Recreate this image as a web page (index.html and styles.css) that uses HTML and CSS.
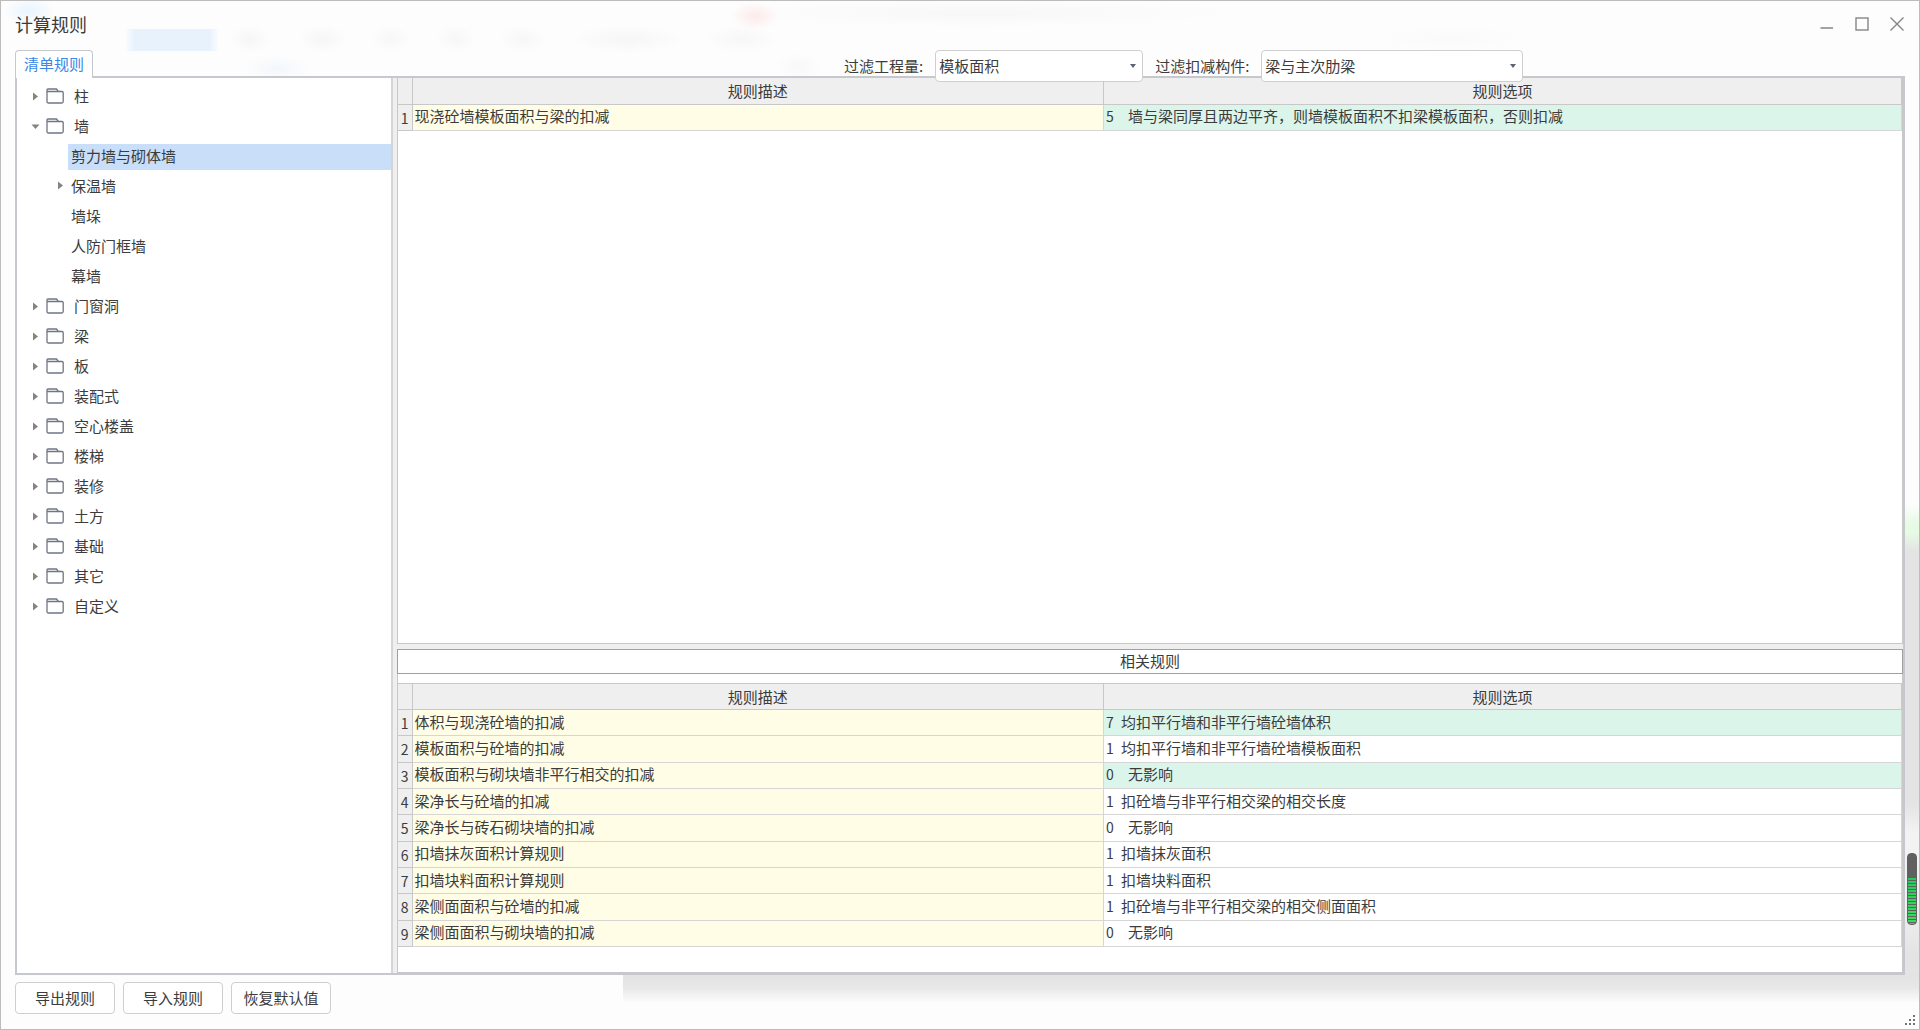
FILE: index.html
```html
<!DOCTYPE html>
<html lang="zh-CN">
<head>
<meta charset="utf-8">
<title>计算规则</title>
<link rel="stylesheet" href="styles.css">
</head>
<body>
<svg class="defs" width="0" height="0" aria-hidden="true">
  <symbol id="folder" viewBox="0 0 18 16"><path d="M1 4.5V2Q1 1 2 1H10.5L12.5 3.5M1 3.500H16Q17.200 3.500 17.200 4.700V13.500Q17.200 15 15.700 15H2.500Q1 15 1 13.500V3.500" fill="none" stroke="#6f7585" stroke-width="1.300"/></symbol>
  <symbol id="closed" viewBox="0 0 9 9"><path d="M2 0.500L7 4.500L2 8.500Z" fill="#848484"/></symbol>
  <symbol id="open" viewBox="0 0 9 9"><path d="M0.500 2.500H8.500L4.500 7Z" fill="#848484"/></symbol>
</svg>
<div class="window">
  <header class="titlebar">
    <h1 class="title">计算规则</h1>
    <div class="controls">
      <button class="control" aria-label="最小化"><svg width="14" height="14"><path d="M0.500 11H13" stroke="#858585" stroke-width="1.500"/></svg></button>
      <button class="control" aria-label="最大化"><svg width="14" height="14"><rect x="1" y="1" width="12" height="12" fill="none" stroke="#858585" stroke-width="1.400"/></svg></button>
      <button class="control" aria-label="关闭"><svg width="14" height="14"><path d="M0.500 0.500L13.500 13.500M13.500 0.500L0.500 13.500" stroke="#858585" stroke-width="1.400"/></svg></button>
    </div>
  </header>

  <div class="toolbar">
    <button class="tab">清单规则</button>
    <div class="filters">
      <label class="filter-label" for="quantity">过滤工程量:</label>
      <select class="combo" id="quantity"><option>模板面积</option></select>
      <label class="filter-label" for="component">过滤扣减构件:</label>
      <select class="combo combo-wide" id="component"><option>梁与主次肋梁</option></select>
    </div>
  </div>

  <main class="pane">
    <nav class="tree">
      <div class="node"><svg class="arrow"><use href="#closed"/></svg><svg class="folder"><use href="#folder"/></svg><span>柱</span></div>
      <div class="node"><svg class="arrow"><use href="#open"/></svg><svg class="folder"><use href="#folder"/></svg><span>墙</span></div>
      <div class="node child"><span class="leaf selected">剪力墙与砌体墙</span></div>
      <div class="node child"><svg class="arrow"><use href="#closed"/></svg><span class="leaf">保温墙</span></div>
      <div class="node child"><span class="leaf">墙垛</span></div>
      <div class="node child"><span class="leaf">人防门框墙</span></div>
      <div class="node child"><span class="leaf">幕墙</span></div>
      <div class="node"><svg class="arrow"><use href="#closed"/></svg><svg class="folder"><use href="#folder"/></svg><span>门窗洞</span></div>
      <div class="node"><svg class="arrow"><use href="#closed"/></svg><svg class="folder"><use href="#folder"/></svg><span>梁</span></div>
      <div class="node"><svg class="arrow"><use href="#closed"/></svg><svg class="folder"><use href="#folder"/></svg><span>板</span></div>
      <div class="node"><svg class="arrow"><use href="#closed"/></svg><svg class="folder"><use href="#folder"/></svg><span>装配式</span></div>
      <div class="node"><svg class="arrow"><use href="#closed"/></svg><svg class="folder"><use href="#folder"/></svg><span>空心楼盖</span></div>
      <div class="node"><svg class="arrow"><use href="#closed"/></svg><svg class="folder"><use href="#folder"/></svg><span>楼梯</span></div>
      <div class="node"><svg class="arrow"><use href="#closed"/></svg><svg class="folder"><use href="#folder"/></svg><span>装修</span></div>
      <div class="node"><svg class="arrow"><use href="#closed"/></svg><svg class="folder"><use href="#folder"/></svg><span>土方</span></div>
      <div class="node"><svg class="arrow"><use href="#closed"/></svg><svg class="folder"><use href="#folder"/></svg><span>基础</span></div>
      <div class="node"><svg class="arrow"><use href="#closed"/></svg><svg class="folder"><use href="#folder"/></svg><span>其它</span></div>
      <div class="node"><svg class="arrow"><use href="#closed"/></svg><svg class="folder"><use href="#folder"/></svg><span>自定义</span></div>
    </nav>

    <div class="rules">
      <section class="panel panel-main">
        <table class="grid">
          <colgroup><col class="col-num"><col class="col-desc"><col></colgroup>
          <thead><tr><th></th><th>规则描述</th><th>规则选项</th></tr></thead>
          <tbody>
            <tr class="changed"><td>1</td><td>现浇砼墙模板面积与梁的扣减</td><td><span class="code code-wide">5</span>墙与梁同厚且两边平齐，则墙模板面积不扣梁模板面积，否则扣减</td></tr>
          </tbody>
        </table>
      </section>
      <h2 class="related">相关规则</h2>
      <section class="panel panel-related">
        <table class="grid grid-related">
          <colgroup><col class="col-num"><col class="col-desc"><col></colgroup>
          <thead><tr><th></th><th>规则描述</th><th>规则选项</th></tr></thead>
          <tbody>
            <tr class="changed"><td>1</td><td>体积与现浇砼墙的扣减</td><td><span class="code">7</span>均扣平行墙和非平行墙砼墙体积</td></tr>
            <tr><td>2</td><td>模板面积与砼墙的扣减</td><td><span class="code">1</span>均扣平行墙和非平行墙砼墙模板面积</td></tr>
            <tr class="changed"><td>3</td><td>模板面积与砌块墙非平行相交的扣减</td><td><span class="code code-wide">0</span>无影响</td></tr>
            <tr><td>4</td><td>梁净长与砼墙的扣减</td><td><span class="code">1</span>扣砼墙与非平行相交梁的相交长度</td></tr>
            <tr><td>5</td><td>梁净长与砖石砌块墙的扣减</td><td><span class="code code-wide">0</span>无影响</td></tr>
            <tr><td>6</td><td>扣墙抹灰面积计算规则</td><td><span class="code">1</span>扣墙抹灰面积</td></tr>
            <tr><td>7</td><td>扣墙块料面积计算规则</td><td><span class="code">1</span>扣墙块料面积</td></tr>
            <tr><td>8</td><td>梁侧面面积与砼墙的扣减</td><td><span class="code">1</span>扣砼墙与非平行相交梁的相交侧面面积</td></tr>
            <tr><td>9</td><td>梁侧面面积与砌块墙的扣减</td><td><span class="code code-wide">0</span>无影响</td></tr>
          </tbody>
        </table>
      </section>
    </div>
  </main>

  <footer class="actions">
    <button class="action">导出规则</button>
    <button class="action">导入规则</button>
    <button class="action">恢复默认值</button>
  </footer>

  <div class="meter" aria-hidden="true"></div>
  <svg class="grip" width="11" height="11" aria-hidden="true"><path d="M8 0h2v2h-2zM8 4h2v2h-2zM8 8h2v2h-2zM4 4h2v2h-2zM4 8h2v2h-2zM0 8h2v2h-2z" fill="#6d737c"/></svg>
</div>
</body>
</html>
```
FILE: styles.css
```css
* { box-sizing: border-box; }

body {
  margin: 0;
  font: 15px/20px "Noto Sans CJK SC", sans-serif;
  color: #3c3c3c;
}

button, select { font: inherit; color: inherit; margin: 0; }

.defs { position: absolute; }

.window {
  position: relative;
  display: flex;
  flex-direction: column;
  min-height: 100vh;
  padding: 0 14px;
  border: 1px solid #bcbcbc;
  background:
    radial-gradient(ellipse 26px 14px at 28px 10px, #e9f5fd, transparent),
    linear-gradient(90deg, transparent, #e8f2fd 10%, #e8f2fd 90%, transparent) 124px 28px / 94px 22px no-repeat,
    radial-gradient(ellipse 24px 14px at 754px 15px, #fdeaea, transparent),
    radial-gradient(ellipse 250px 14px at 980px 12px, #f7f7f7, transparent),
    radial-gradient(ellipse 20px 14px at 249px 38px, #f6f6f6, transparent),
    radial-gradient(ellipse 24px 14px at 322px 38px, #f6f6f6, transparent),
    radial-gradient(ellipse 20px 14px at 390px 38px, #f7f7f7, transparent),
    radial-gradient(ellipse 20px 14px at 455px 38px, #f7f7f7, transparent),
    radial-gradient(ellipse 24px 14px at 522px 38px, #f7f7f7, transparent),
    radial-gradient(ellipse 56px 14px at 626px 38px, #f6f6f6, transparent),
    radial-gradient(ellipse 36px 14px at 740px 38px, #f7f7f7, transparent),
    radial-gradient(ellipse 70px 14px at 1450px 38px, #fafafa, transparent),
    radial-gradient(ellipse 34px 14px at 276px 68px, #f3f7fc, transparent),
    radial-gradient(ellipse 24px 14px at 798px 66px, #f8f8f8, transparent),
    linear-gradient(transparent, #e6fae4 20px, #e6fae4 30px, #e4e4e4 46px, #e4e4e4 300px, #f3f3f3 330px, #f0f0f0 400px, #e4e4e4 450px) right bottom 55px / 14px 470px no-repeat,
    linear-gradient(#e2e2e2, #e8e8e8 50%, #fdfdfd) right bottom 26px / calc(100% - 622px) 30px no-repeat,
    #fdfdfd;
}

.titlebar {
  display: flex;
  justify-content: space-between;
  align-items: center;
  height: 49px;
  padding-bottom: 3px;
}

.title { margin: 0; font-size: 18px; line-height: 24px; font-weight: 400; }

.controls { display: flex; gap: 21px; padding-right: 1px; }

.control {
  display: flex;
  width: 14px;
  height: 14px;
  padding: 0;
  border: 0;
  background: none;
}

.toolbar {
  position: relative;
  z-index: 1;
  display: flex;
  height: 26px;
}

.tab {
  width: 78px;
  height: 28px;
  padding: 0 0 2px;
  border: 1px solid #c5c8cc;
  border-bottom: 0;
  border-radius: 4px 4px 0 0;
  background: #fff;
  color: #3a87e8;
}

.filters {
  display: flex;
  align-items: center;
  height: 32px;
  margin-left: 751px;
}

.combo {
  width: 208px;
  height: 32px;
  margin: 0 12px;
  padding: 0 3px;
  border: 1px solid #cfcfcf;
  border-radius: 4px;
  appearance: none;
  background: #fff url("data:image/svg+xml,%3Csvg xmlns='http://www.w3.org/2000/svg' width='6' height='4'%3E%3Cpath d='M0 0H6L3 4Z' fill='%235c6370'/%3E%3C/svg%3E") right 6px center no-repeat;
}

.combo-wide { width: 262px; }

.pane {
  flex: 1;
  display: flex;
  border: 2px solid #c5c8cc;
  background: #efefef;
}

.tree {
  width: 376px;
  padding-top: 4px;
  border-right: 2px solid #d5d5d5;
  background: #fff;
}

.node {
  display: flex;
  align-items: center;
  height: 30px;
  padding: 0 0 2px 14px;
}

.arrow { width: 9px; height: 9px; margin-right: 6px; }

.folder { width: 18px; height: 16px; margin-right: 10px; }

.child { position: relative; padding: 0 0 0 51px; }

.child .arrow { position: absolute; left: 39px; top: 9px; margin: 0; }

.leaf { flex: 1; height: 26px; padding-left: 3px; line-height: 24px; }

.selected { background: #c9dff9; }

.rules {
  flex: 1;
  display: flex;
  flex-direction: column;
  min-width: 0;
  margin-left: 4px;
}

.panel {
  border: 1px solid #c8c8c8;
  background: #fff;
}

.panel-main { flex: 1; border-top: 0; }

.related {
  height: 25px;
  margin: 5px 0 0;
  border: 1px solid #a0a0a0;
  background: #fff;
  font-size: 15px;
  line-height: 22px;
  font-weight: 400;
  text-align: center;
}

.panel-related { height: 299px; border-top: 0; padding-top: 9px; }

.grid {
  width: 100%;
  border-collapse: collapse;
  table-layout: fixed;
}

.grid-related { height: 264px; border-top: 1px solid #c8c8c8; }

.col-num { width: 14px; }

.col-desc { width: 46%; }

.grid th, .grid td {
  height: 26px;
  padding: 0 2px 2px;
  border-bottom: 1px solid #d6d6d6;
  border-right: 1px solid #d6d6d6;
  font-weight: 400;
  line-height: 20px;
  text-align: left;
  white-space: nowrap;
}

.grid th { padding-bottom: 0; border-color: #c8c8c8; background: #efefef; text-align: center; }

.grid td:first-child {
  padding: 1px 0 0;
  background: #efefef;
  border-color: #c8c8c8;
  font-size: 14px;
  text-align: center;
}

.grid td:nth-child(2) { background: #fffde6; }

.grid .changed td:last-child { background: #dcf5ea; }

.code { display: inline-block; width: 15px; font-size: 14px; }

.code-wide { width: 22px; }

.actions { display: flex; gap: 8px; padding: 7px 0 15px; }

.action {
  width: 100px;
  height: 32px;
  padding: 0;
  border: 1px solid #cfcfcf;
  border-radius: 4px;
  background: #fff;
}

.meter {
  position: absolute;
  right: 2px;
  bottom: 104px;
  width: 10px;
  height: 72px;
  border: 1px solid #606060;
  border-radius: 4px;
  background:
    repeating-linear-gradient(transparent 0 2px, #606060 2px 3px),
    linear-gradient(#606060 24px, #1fce5c 24px, #42d95f);
}

.grip { position: absolute; right: 3px; bottom: 3px; }
```
